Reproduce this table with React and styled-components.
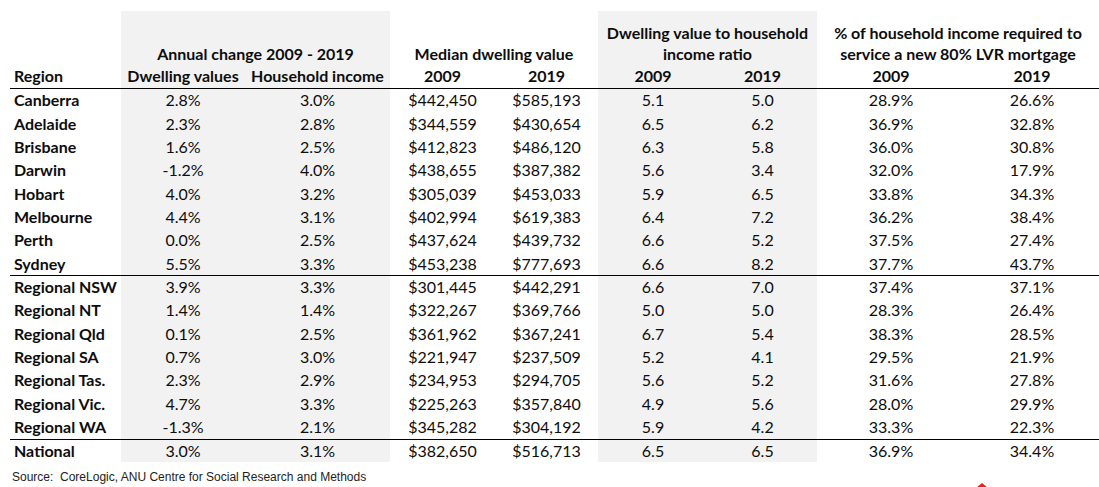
import React from 'react';
import styled, { createGlobalStyle } from 'styled-components';

const GlobalStyle = createGlobalStyle`
  html, body {
    margin: 0;
    padding: 0;
    background: #ffffff;
  }
  body {
    font-family: Lato, "Liberation Sans", sans-serif;
    color: #000;
  }
`;

const ROW = 23.33;

const rows = [
  ['Canberra', '2.8%', '3.0%', '$442,450', '$585,193', '5.1', '5.0', '28.9%', '26.6%'],
  ['Adelaide', '2.3%', '2.8%', '$344,559', '$430,654', '6.5', '6.2', '36.9%', '32.8%'],
  ['Brisbane', '1.6%', '2.5%', '$412,823', '$486,120', '6.3', '5.8', '36.0%', '30.8%'],
  ['Darwin', '-1.2%', '4.0%', '$438,655', '$387,382', '5.6', '3.4', '32.0%', '17.9%'],
  ['Hobart', '4.0%', '3.2%', '$305,039', '$453,033', '5.9', '6.5', '33.8%', '34.3%'],
  ['Melbourne', '4.4%', '3.1%', '$402,994', '$619,383', '6.4', '7.2', '36.2%', '38.4%'],
  ['Perth', '0.0%', '2.5%', '$437,624', '$439,732', '6.6', '5.2', '37.5%', '27.4%'],
  ['Sydney', '5.5%', '3.3%', '$453,238', '$777,693', '6.6', '8.2', '37.7%', '43.7%'],
  ['Regional NSW', '3.9%', '3.3%', '$301,445', '$442,291', '6.6', '7.0', '37.4%', '37.1%'],
  ['Regional NT', '1.4%', '1.4%', '$322,267', '$369,766', '5.0', '5.0', '28.3%', '26.4%'],
  ['Regional Qld', '0.1%', '2.5%', '$361,962', '$367,241', '6.7', '5.4', '38.3%', '28.5%'],
  ['Regional SA', '0.7%', '3.0%', '$221,947', '$237,509', '5.2', '4.1', '29.5%', '21.9%'],
  ['Regional Tas.', '2.3%', '2.9%', '$234,953', '$294,705', '5.6', '5.2', '31.6%', '27.8%'],
  ['Regional Vic.', '4.7%', '3.3%', '$225,263', '$357,840', '4.9', '5.6', '28.0%', '29.9%'],
  ['Regional WA', '-1.3%', '2.1%', '$345,282', '$304,192', '5.9', '4.2', '33.3%', '22.3%'],
  ['National', '3.0%', '3.1%', '$382,650', '$516,713', '6.5', '6.5', '36.9%', '34.4%'],
];

// columns 1,2 and 5,6 (zero based) sit on the grey bands
const shadedCols = [1, 2, 5, 6];
const ruledRows = ['Regional NSW', 'National'];

const Page = styled.div`
  padding: 11px 0 0 10px;
  width: 1089px;
`;

const Grid = styled.div`
  display: grid;
  grid-template-columns: 111px 124px 145px 105px 103px 110px 109px 148px 134px;
  grid-template-rows: 31px ${ROW}px ${ROW}px repeat(16, ${ROW}px);
`;

const Cell = styled.div`
  box-sizing: border-box;
  display: flex;
  align-items: ${(p) => (p.$top ? 'flex-end' : 'center')};
  justify-content: ${(p) => (p.$left ? 'flex-start' : 'center')};
  padding-left: ${(p) => (p.$left ? '4px' : '0')};
  padding-bottom: ${(p) => (p.$top ? '1px' : '0')};
  grid-column: ${(p) => (p.$span ? `span ${p.$span}` : 'auto')};
  background: ${(p) => (p.$shaded ? '#f2f2f2' : 'transparent')};
  border-top: ${(p) => (p.$ruleTop ? '1px solid #000' : 'none')};
  border-bottom: ${(p) => (p.$ruleBottom ? '1px solid #000' : 'none')};
  font-size: 16px;
  font-weight: ${(p) => (p.$bold ? 700 : 400)};
  line-height: 1;
  white-space: nowrap;
  color: #0d0d0d;
`;

const Footer = styled.div`
  display: flex;
  align-items: flex-end;
  height: 26px;
  padding-left: 2px;
  padding-right: 111px;
`;

const Source = styled.span`
  font-family: "Liberation Sans", Arial, sans-serif;
  font-size: 12px;
  color: #222;
  padding-bottom: 4px;
  white-space: pre;
`;

const Mark = styled.svg`
  margin-left: auto;
  width: 12px;
  height: 5px;
  display: block;
`;

const HeaderRows = () => (
  <>
    {/* row 1 */}
    <Cell />
    <Cell $shaded />
    <Cell $shaded />
    <Cell />
    <Cell />
    <Cell $shaded $span={2} $bold $top>Dwelling value to household</Cell>
    <Cell $span={2} $bold $top>% of household income required to</Cell>

    {/* row 2 */}
    <Cell />
    <Cell $shaded $span={2} $bold>Annual change 2009 - 2019</Cell>
    <Cell $span={2} $bold>Median dwelling value</Cell>
    <Cell $shaded $span={2} $bold>income ratio</Cell>
    <Cell $span={2} $bold>service a new 80% LVR mortgage</Cell>

    {/* row 3 */}
    <Cell $left $bold $ruleBottom>Region</Cell>
    <Cell $shaded $bold $ruleBottom>Dwelling values</Cell>
    <Cell $shaded $bold $ruleBottom>Household income</Cell>
    <Cell $bold $ruleBottom>2009</Cell>
    <Cell $bold $ruleBottom>2019</Cell>
    <Cell $shaded $bold $ruleBottom>2009</Cell>
    <Cell $shaded $bold $ruleBottom>2019</Cell>
    <Cell $bold $ruleBottom>2009</Cell>
    <Cell $bold $ruleBottom>2019</Cell>
  </>
);

const BodyRow = ({ values }) => {
  const ruled = ruledRows.includes(values[0]);
  return values.map((v, i) => (
    <Cell
      key={i}
      $left={i === 0}
      $bold={i === 0}
      $shaded={shadedCols.includes(i)}
      $ruleTop={ruled}
    >
      {v}
    </Cell>
  ));
};

export default function App() {
  return (
    <>
      <GlobalStyle />
      <Page>
        <Grid>
          <HeaderRows />
          {rows.map((r) => (
            <BodyRow key={r[0]} values={r} />
          ))}
        </Grid>
        <Footer>
          <Source>Source:  CoreLogic, ANU Centre for Social Research and Methods</Source>
          <Mark viewBox="0 0 12 5">
            <polygon points="6,0 12,5 0,5" fill="#e2231a" />
          </Mark>
        </Footer>
      </Page>
    </>
  );
}
